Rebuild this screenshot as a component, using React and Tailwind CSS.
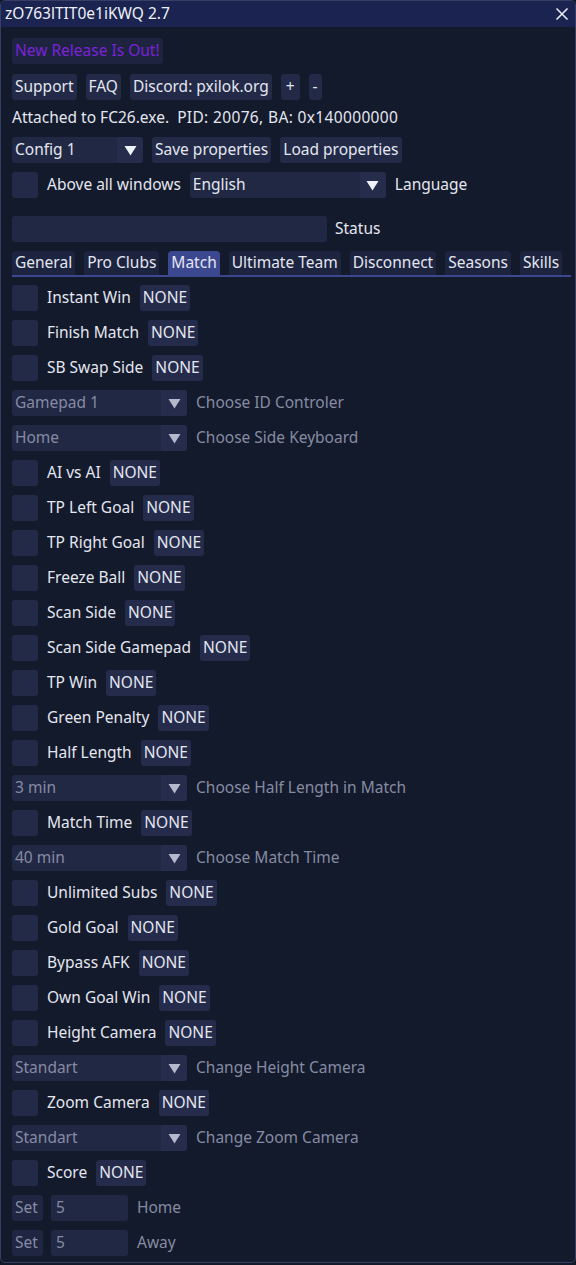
import React from "react";

const FONT = { fontFamily: '"Noto Sans", "Open Sans", sans-serif' };

function Btn({ children, className = "" }) {
  return (
    <div className={`h-[26px] px-[3px] flex items-center bg-[#222a47] rounded-[3px] text-[#e4e6f0] whitespace-nowrap ${className}`}>
      {children}
    </div>
  );
}

function Check() {
  return <div className="w-[26px] h-[26px] bg-[#232a48] rounded-[3px] shrink-0" />;
}

function Arrow({ dim }) {
  return (
    <svg width="13" height="11" viewBox="0 0 13 11">
      <polygon points="0.5,1 12.5,1 6.5,10.5" fill={dim ? "#b4b8cc" : "#f0f2fa"} />
    </svg>
  );
}

function Combo({ value, width, dim }) {
  return (
    <div
      className="h-[26px] flex items-center bg-[#212844] rounded-[3px] shrink-0 overflow-hidden"
      style={{ width }}
    >
      <div className={`flex-1 pl-[3px] whitespace-nowrap ${dim ? "text-[#868ba3]" : "text-[#e4e6f0]"}`}>{value}</div>
      <div className="w-[26px] h-full flex items-center justify-center bg-[#252c4c]">
        <Arrow dim={dim} />
      </div>
    </div>
  );
}

function CheckRow({ label }) {
  return (
    <div className="h-[26px] flex items-center">
      <Check />
      <span className="ml-[9px] text-[#e4e6f0] whitespace-nowrap">{label}</span>
      <div className="ml-[9px] h-[26px] px-[3px] flex items-center bg-[#252c4b] rounded-[3px] text-[#e4e6f0]">NONE</div>
    </div>
  );
}

function ComboRow({ value, label }) {
  return (
    <div className="h-[26px] flex items-center">
      <Combo value={value} width={175} dim />
      <span className="ml-[9px] text-[#868ba3] whitespace-nowrap">{label}</span>
    </div>
  );
}

function SetRow({ label }) {
  return (
    <div className="h-[26px] flex items-center">
      <div className="w-[31px] h-[26px] flex items-center pl-[3px] bg-[#1f2641] rounded-[3px] text-[#868ba3]">Set</div>
      <div className="ml-[8px] w-[77px] h-[26px] flex items-center pl-[5px] bg-[#212844] rounded-[3px] text-[#868ba3]">5</div>
      <span className="ml-[9px] text-[#868ba3]">{label}</span>
    </div>
  );
}

const items = [
  ["c", "Instant Win"],
  ["c", "Finish Match"],
  ["c", "SB Swap Side"],
  ["d", "Gamepad 1", "Choose ID Controler"],
  ["d", "Home", "Choose Side Keyboard"],
  ["c", "AI vs AI"],
  ["c", "TP Left Goal"],
  ["c", "TP Right Goal"],
  ["c", "Freeze Ball"],
  ["c", "Scan Side"],
  ["c", "Scan Side Gamepad"],
  ["c", "TP Win"],
  ["c", "Green Penalty"],
  ["c", "Half Length"],
  ["d", "3 min", "Choose Half Length in Match"],
  ["c", "Match Time"],
  ["d", "40 min", "Choose Match Time"],
  ["c", "Unlimited Subs"],
  ["c", "Gold Goal"],
  ["c", "Bypass AFK"],
  ["c", "Own Goal Win"],
  ["c", "Height Camera"],
  ["d", "Standart", "Change Height Camera"],
  ["c", "Zoom Camera"],
  ["d", "Standart", "Change Zoom Camera"],
  ["c", "Score"],
  ["s", "Home"],
  ["s", "Away"],
];

const tabs = ["General", "Pro Clubs", "Match", "Ultimate Team", "Disconnect", "Seasons", "Skills"];

export default function App() {
  return (
    <div className="w-[576px] h-[1265px] bg-[#121828] text-[15.5px] leading-none" style={FONT}>
      <div className="w-[576px] h-[1263px] bg-[#131a2b] border border-[#363e66] rounded-[5px] overflow-hidden flex flex-col">
        <div className="h-[26px] shrink-0 bg-[#1b2450] flex items-center justify-between pl-[4px] pr-[6px]">
          <span className="text-[#eef0f8]">zO763lTIT0e1iKWQ 2.7</span>
          <svg width="14" height="14" viewBox="0 0 14 14">
            <path d="M1.5 1.5 L12.5 12.5 M12.5 1.5 L1.5 12.5" stroke="#e8eaf4" strokeWidth="1.6" />
          </svg>
        </div>
        <div className="px-[11px] flex flex-col">
          <div className="mt-[11px] h-[26px] flex">
            <div className="h-[26px] px-[3px] flex items-center bg-[#1e2440] rounded-[3px] text-[#7b22d8]">New Release Is Out!</div>
          </div>
          <div className="mt-[10px] h-[26px] flex items-center gap-[9px]">
            <Btn>Support</Btn>
            <Btn>FAQ</Btn>
            <Btn>Discord: pxilok.org</Btn>
            <Btn className="px-[5px]">+</Btn>
            <Btn className="px-[4px]">-</Btn>
          </div>
          <div className="mt-[5px] h-[26px] flex items-center text-[#e4e6f0] whitespace-pre">
            <span>Attached to FC26.exe.  </span>
            <span className="tracking-[0.35px]">PID: 20076, BA: 0x140000000</span>
          </div>
          <div className="mt-[6px] h-[26px] flex items-center gap-[9px]">
            <Combo value="Config 1" width={131} />
            <Btn>Save properties</Btn>
            <Btn>Load properties</Btn>
          </div>
          <div className="mt-[9px] h-[26px] flex items-center">
            <Check />
            <span className="ml-[9px] text-[#e4e6f0]">Above all windows</span>
            <div className="ml-[9px]">
              <Combo value="English" width={196} />
            </div>
            <span className="ml-[9px] text-[#e4e6f0]">Language</span>
          </div>
          <div className="mt-[18px] h-[26px] flex items-center">
            <div className="w-[315px] h-[26px] bg-[#212844] rounded-[3px]" />
            <span className="ml-[8px] text-[#e4e6f0]">Status</span>
          </div>
          <div className="mt-[8px] flex flex-col">
            <div className="h-[25px] flex items-end gap-[9px]">
              {tabs.map((t) => (
                <div
                  key={t}
                  className={`h-[24px] px-[3px] flex items-center rounded-t-[4px] text-[#e4e6f0] whitespace-nowrap ${
                    t === "Match" ? "bg-[#3b4890]" : "bg-[#1d2440]"
                  }`}
                >
                  {t}
                </div>
              ))}
            </div>
            <div className="h-[2px] w-[559px] bg-[#3b4890]" />
          </div>
          <div className="mt-[8px] flex flex-col gap-[9px]">
            {items.map((it, i) =>
              it[0] === "c" ? (
                <CheckRow key={i} label={it[1]} />
              ) : it[0] === "d" ? (
                <ComboRow key={i} value={it[1]} label={it[2]} />
              ) : (
                <SetRow key={i} label={it[1]} />
              )
            )}
          </div>
        </div>
      </div>
    </div>
  );
}
